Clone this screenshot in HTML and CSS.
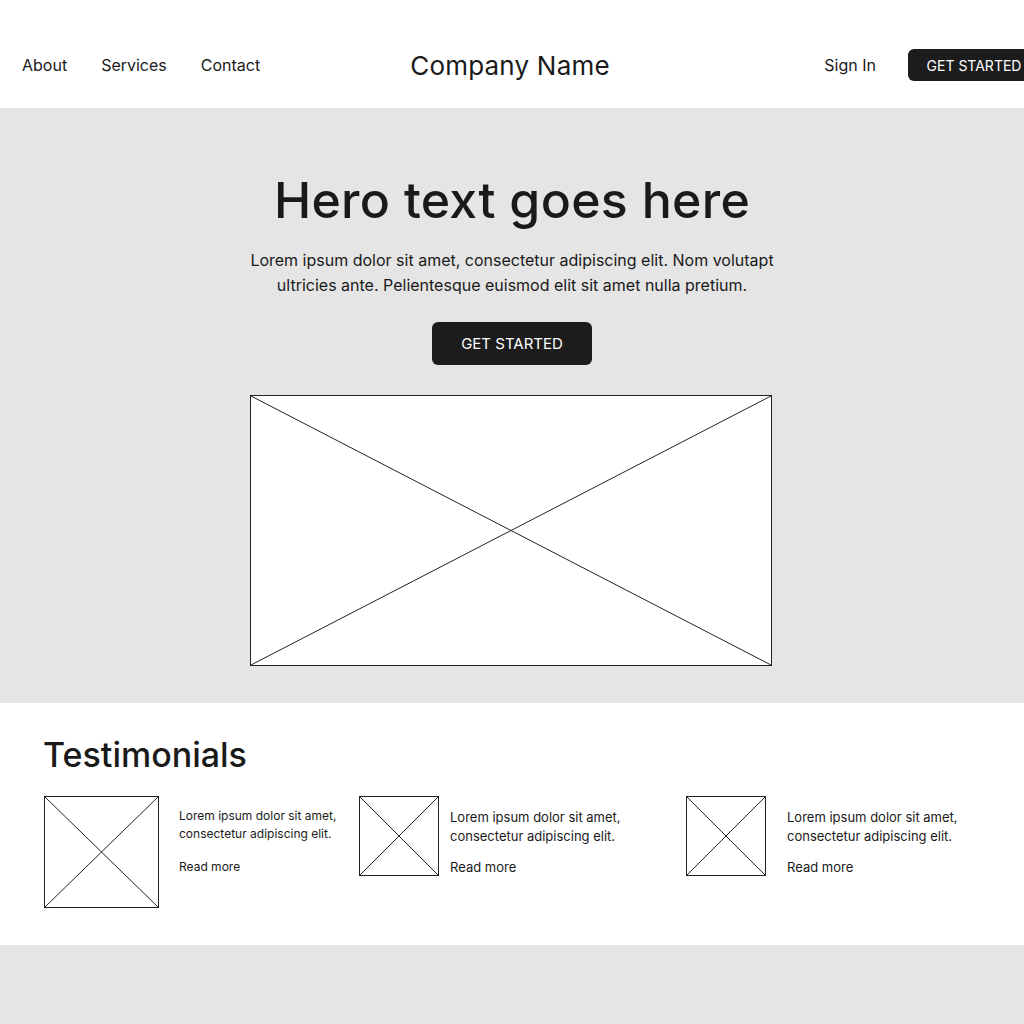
FILE: index.html
```html
<!DOCTYPE html>
<html lang="en">
<head>
    <meta charset="UTF-8">
    <meta name="viewport" content="width=device-width, initial-scale=1.0">
    <title>Company Name</title>
    <link rel="stylesheet" href="styles.css">
</head>
<body>
    <header class="site-header">
        <nav class="main-nav">
            <a href="#">About</a>
            <a href="#">Services</a>
            <a href="#">Contact</a>
        </nav>
        <div class="brand">Company Name</div>
        <div class="header-actions">
            <a href="#" class="sign-in">Sign In</a>
            <a href="#" class="btn btn-small">GET STARTED</a>
        </div>
    </header>

    <section class="hero">
        <h1>Hero text goes here</h1>
        <p>Lorem ipsum dolor sit amet, consectetur adipiscing elit. Nom volutapt ultricies ante. Pelientesque euismod elit sit amet nulla pretium.</p>
        <a href="#" class="btn btn-large">GET STARTED</a>
        <div class="placeholder hero-image">
            <svg viewBox="0 0 100 100" preserveAspectRatio="none">
                <line x1="0" y1="0" x2="100" y2="100" vector-effect="non-scaling-stroke"/>
                <line x1="100" y1="0" x2="0" y2="100" vector-effect="non-scaling-stroke"/>
            </svg>
        </div>
    </section>

    <section class="testimonials">
        <h2>Testimonials</h2>
        <div class="testimonial-list">
            <div class="testimonial t-first">
                <div class="placeholder thumb thumb-big">
                    <svg viewBox="0 0 100 100" preserveAspectRatio="none">
                        <line x1="0" y1="0" x2="100" y2="100" vector-effect="non-scaling-stroke"/>
                        <line x1="100" y1="0" x2="0" y2="100" vector-effect="non-scaling-stroke"/>
                    </svg>
                </div>
                <div class="testimonial-text">
                    <p>Lorem ipsum dolor sit amet, consectetur adipiscing elit.</p>
                    <a href="#">Read more</a>
                </div>
            </div>
            <div class="testimonial t-second">
                <div class="placeholder thumb">
                    <svg viewBox="0 0 100 100" preserveAspectRatio="none">
                        <line x1="0" y1="0" x2="100" y2="100" vector-effect="non-scaling-stroke"/>
                        <line x1="100" y1="0" x2="0" y2="100" vector-effect="non-scaling-stroke"/>
                    </svg>
                </div>
                <div class="testimonial-text">
                    <p>Lorem ipsum dolor sit amet, consectetur adipiscing elit.</p>
                    <a href="#">Read more</a>
                </div>
            </div>
            <div class="testimonial t-third">
                <div class="placeholder thumb">
                    <svg viewBox="0 0 100 100" preserveAspectRatio="none">
                        <line x1="0" y1="0" x2="100" y2="100" vector-effect="non-scaling-stroke"/>
                        <line x1="100" y1="0" x2="0" y2="100" vector-effect="non-scaling-stroke"/>
                    </svg>
                </div>
                <div class="testimonial-text">
                    <p>Lorem ipsum dolor sit amet, consectetur adipiscing elit.</p>
                    <a href="#">Read more</a>
                </div>
            </div>
        </div>
    </section>

    <footer class="site-footer"></footer>
</body>
</html>
```

FILE: styles.css
```css
body { font-family: 'Inter', 'Noto Sans', sans-serif; color: #1a1a1a; background: #e5e5e5; margin: 0; overflow-x: hidden; }
a { color: inherit; text-decoration: none; }

/* header */
.site-header { background: #fff; height: 108px; box-sizing: border-box; padding: 22px 22px 0; display: grid; grid-template-columns: 1fr auto 1fr; align-items: center; }
.main-nav { display: flex; gap: 34px; font-size: 16px; }
.brand { font-size: 26px; letter-spacing: 0.2px; color: #1a1a1a; margin-right: 4px; }
.header-actions { display: flex; align-items: center; gap: 32px; justify-content: flex-end; margin-right: -38px; }
.sign-in { font-size: 16px; }

.btn { display: inline-flex; align-items: center; justify-content: center; background: #1c1c1c; color: #fff; border-radius: 6px; }
.btn-small { width: 132px; height: 32px; font-size: 14px; }
.btn-large { width: 160px; height: 43px; font-size: 15px; }

/* hero */
.hero { display: flex; flex-direction: column; align-items: center; padding: 62px 0 37px; }
.hero h1 { font-size: 50px; font-weight: 500; margin: 0 0 18px; letter-spacing: 0.3px; }
.hero p { width: 530px; text-align: center; font-size: 16px; line-height: 25px; margin: 0 0 24px; }
.placeholder { background: #fff; border: 1px solid #222; box-sizing: border-box; }
.placeholder svg { display: block; width: 100%; height: 100%; }
.placeholder line { stroke: #222; stroke-width: 1; }
.hero-image { width: 522px; height: 271px; margin-top: 30px; margin-right: 2px; }

/* testimonials */
.testimonials { background: #fff; padding: 31px 0 37px 43px; }
.testimonials h2 { font-size: 34px; font-weight: 500; margin: 0 0 21px; }
.testimonial-list { display: flex; }
.testimonial { display: flex; align-items: flex-start; }
.t-first { width: 316px; }
.t-second { width: 327px; }
.thumb { width: 80px; height: 80px; flex-shrink: 0; }
.thumb-big { width: 115px; height: 112px; margin-left: 1px; }
.testimonial-text { padding-top: 12px; font-size: 13px; line-height: 19px; }
.t-first .testimonial-text { margin-left: 20px; font-size: 12px; line-height: 18px; padding-top: 11px; }
.t-first .testimonial-text p { margin-bottom: 15px; }
.t-second .testimonial-text { margin-left: 11px; }
.t-third .testimonial-text { margin-left: 21px; }
.testimonial-text p { margin: 0 0 12px; width: 180px; }

.site-footer { height: 80px; }
```
